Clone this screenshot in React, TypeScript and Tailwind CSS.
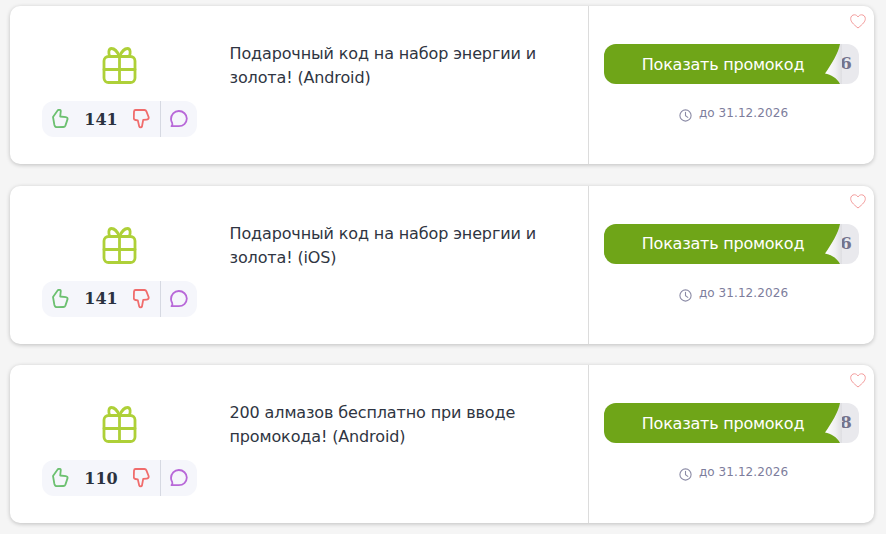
const font = { fontFamily: '"DejaVu Sans", sans-serif' };

function Gift() {
  return (
    <svg width="36" height="38" viewBox="0 0 36 38" fill="none" stroke="#aed038" strokeWidth="2.8" strokeLinecap="round" strokeLinejoin="round">
      <rect x="2" y="9.5" width="31" height="26" rx="4.5" />
      <path d="M2 22.5H33M17.5 9.5V35.5" />
      <path d="M17.5 9.5C15.5 4.5 12 1.5 9.5 1.5C6.5 1.5 6 6.5 8 9.5" />
      <path d="M17.5 9.5C19.5 4.5 23 1.5 25.5 1.5C28.5 1.5 29 6.5 27 9.5" />
    </svg>
  );
}

function Up() {
  return (
    <svg className="shrink-0" width="17" height="20" viewBox="0 0 17 20" fill="none" stroke="#6cc070" strokeWidth="1.8" strokeLinejoin="round" strokeLinecap="round">
      <path d="M1 8L5.8 1.2C6.6 .5 8.6 .6 8.8 1.8L8.2 7.5L13.8 8.1C15.2 8.3 15.8 9.2 15.5 10.4L13.4 16.6C13 17.6 12.4 18 11.4 18L5 18.2C3.6 18.2 2.8 17.4 2.4 16Z" />
    </svg>
  );
}

function Down() {
  return (
    <svg className="shrink-0" width="17" height="20" viewBox="0 0 17 20" fill="none" stroke="#f06c6c" strokeWidth="1.8" strokeLinejoin="round" strokeLinecap="round">
      <path d="M2.5 1H11.5C12.4 1 13 1.4 13.4 2.4L15.6 8C16 9.6 15 10.6 13.6 10.6L10.2 10.9L9 17.4C8.6 18.6 6.6 18.6 6.2 17.4L4.8 11.4L2.4 11C1.2 10.8 .8 10 .8 9L1 2.6C1.1 1.6 1.6 1 2.5 1Z" />
    </svg>
  );
}

function Chat() {
  return (
    <svg className="shrink-0" width="19" height="18" viewBox="0 0 19 18" fill="none" stroke="#b868d8" strokeWidth="1.8" strokeLinejoin="round" strokeLinecap="round">
      <path d="M1.5 16.2C2.5 15.2 2.7 14.2 2.2 13C1.4 11.8 1 10.4 1 9C1 4.6 4.4 1 8.8 1C13.2 1 16.8 4.4 16.8 8.6C16.8 13 13.2 16.2 8.8 16.2Z" />
    </svg>
  );
}

function Heart() {
  return (
    <svg width="16" height="15" viewBox="0 0 16 15" fill="none" stroke="#f39a9a" strokeWidth="1">
      <path d="M8 14C3 10 .7 7.6 .7 4.6C.7 2.4 2.4 .8 4.4 .8C5.9 .8 7.2 1.6 8 3C8.8 1.6 10.1 .8 11.6 .8C13.6 .8 15.3 2.4 15.3 4.6C15.3 7.6 13 10 8 14Z" />
    </svg>
  );
}

function Clock() {
  return (
    <svg width="13" height="13" viewBox="0 0 13 13" fill="none" stroke="#8b8ba6" strokeWidth="1.1" strokeLinecap="round">
      <circle cx="6.5" cy="6.5" r="5.6" />
      <path d="M6.5 3.2V6.8L8.8 8.4" />
    </svg>
  );
}

function Card({ id, title, title2, up, left }: { id: string; title: string; title2: string; up: number; left: number }) {
  return (
    <div className="relative flex h-[158px] rounded-[10px] bg-white shadow-[0_1px_4px_rgba(0,0,0,0.22)]">
      <div className="absolute right-[8px] top-[8px]"><Heart /></div>
      <div className="flex w-[219px] shrink-0 flex-col items-center pt-[41px]">
        <Gift />
        <div className="mt-[16px] flex h-[36px] w-[155px] items-center rounded-xl bg-[#f5f6fb]">
          <div className="flex w-[118px] items-center pl-[10px]">
            <Up />
            <span className="ml-[15px] w-[34px] pt-px text-center text-[16px] font-bold leading-none text-[#2b3240]" style={{ fontFamily: '"DejaVu Serif", serif' }}>{up}</span>
            <span className="ml-[15px]"><Down /></span>
          </div>
          <div className="h-full w-px bg-[#d6d9e2]" />
          <div className="ml-[9px]"><Chat /></div>
        </div>
      </div>
      <div className="flex-1 pl-[0.5px] pt-[36px] text-[16px] leading-6 tracking-[-0.13px] text-[#2f3542]">
        <div>{title}</div>
        <div>{title2}</div>
      </div>
      <div className="flex w-[286px] shrink-0 flex-col items-center border-l border-[#dcdcdc] pt-[38px]">
        <div className="relative flex h-[40px] w-[255px] overflow-hidden rounded-xl bg-[#e9e9ed]">
          <div className="flex w-[236px] items-center justify-center bg-[#6fa518] pl-[2px] pt-[1px] text-[16px] tracking-[-0.22px] text-white">
            Показать промокод
          </div>
          <span className="flex flex-1 items-center text-[17px] font-bold text-[#73738c]" style={{ fontFamily: '"DejaVu Serif", serif' }}>{left}</span>
          <svg className="absolute left-[221px] top-0" width="17" height="40" viewBox="0 0 17 40">
            <defs>
              <linearGradient id={id} x1="0" y1="0" x2="1" y2="0">
                <stop offset="0" stopColor="#ffffff" />
                <stop offset="0.6" stopColor="#f0f0f2" />
                <stop offset="1" stopColor="#dedee2" />
              </linearGradient>
            </defs>
            <path d="M15 0C13.5 9 6 21 0 29.5C6 30.5 12 34 15 40H17V0Z" fill={`url(#${id})`} />
          </svg>
        </div>
        <div className="mt-[20px] flex items-center pl-[4px] text-[12px] leading-4 tracking-[0.08px] text-[#7d7d9c]">
          <span className="mr-[7px] mt-[5px]"><Clock /></span>
          до 31.12.2026
        </div>
      </div>
    </div>
  );
}

export default function App() {
  return (
    <div className="h-[534px] overflow-hidden bg-[#f5f5f5] pl-[10px] pr-[12px] pt-[6px]" style={font}>
      <div className="flex flex-col gap-[21.5px]">
        <Card id="c1" title="Подарочный код на набор энергии и" title2="золота! (Android)" up={141} left={6} />
        <Card id="c2" title="Подарочный код на набор энергии и" title2="золота! (iOS)" up={141} left={6} />
        <Card id="c3" title="200 алмазов бесплатно при вводе" title2="промокода! (Android)" up={110} left={8} />
      </div>
    </div>
  );
}
